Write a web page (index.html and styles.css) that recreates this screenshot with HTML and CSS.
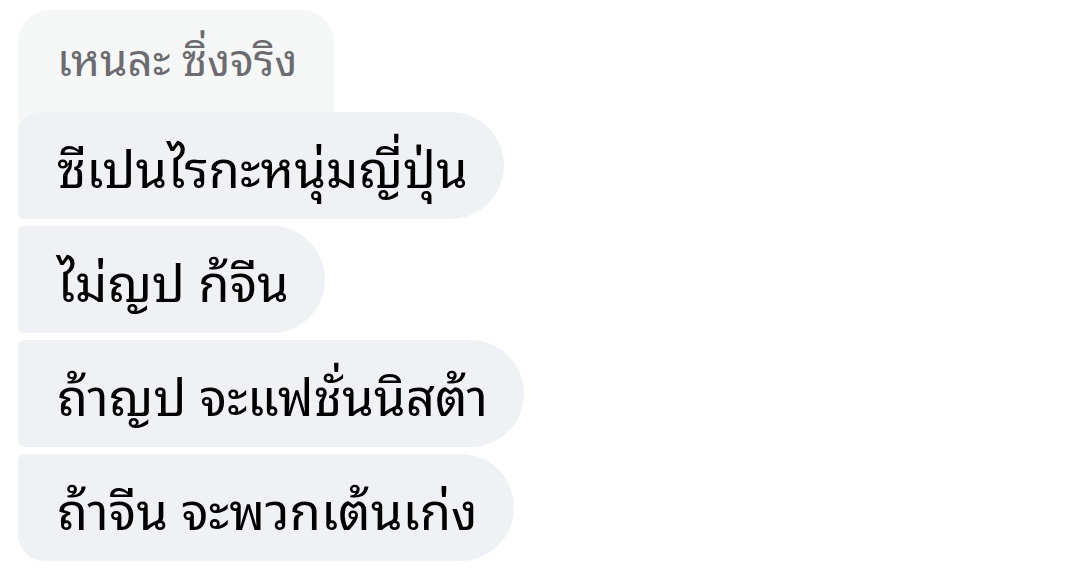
FILE: index.html
```html
<!DOCTYPE html>
<html lang="th">
<head>
<meta charset="utf-8">
<title>Chat</title>
<link rel="stylesheet" href="styles.css">
</head>
<body>
<div class="chat">
  <div class="quote">เหนละ ซิ่งจริง</div>
  <div class="bubble first">ซีเปนไรกะหนุ่มญี่ปุ่น</div>
  <div class="bubble">ไม่ญป ก้จีน</div>
  <div class="bubble">ถ้าญป จะแฟชั่นนิสต้า</div>
  <div class="bubble last">ถ้าจีน จะพวกเต้นเก่ง</div>
</div>
</body>
</html>
```

FILE: styles.css
```css
html, body {
  margin: 0;
  background: #ffffff;
}
body {
  font-family: "Noto Sans Thai Looped", "Noto Serif Thai", serif;
}
.chat {
  display: flex;
  flex-direction: column;
  align-items: flex-start;
  gap: 7px;
  padding: 10px 0 0 18px;
}
.quote {
  background: #f6f7f7;
  color: #6b6b70;
  font-size: 44px;
  line-height: 56px;
  padding: 18px 37px 46px 39px;
  border-radius: 32px 32px 0 0;
  margin-bottom: -25px;
  white-space: nowrap;
}
.bubble {
  position: relative;
  background: #f0f1f5;
  color: #000000;
  font-size: 51px;
  line-height: 107px;
  height: 107px;
  padding: 0 36px 0 39px;
  border-radius: 6px 54px 54px 6px;
  white-space: nowrap;
}
.bubble.first {
  border-top-left-radius: 22px;
}
.bubble.last {
  border-bottom-left-radius: 26px;
}
```
